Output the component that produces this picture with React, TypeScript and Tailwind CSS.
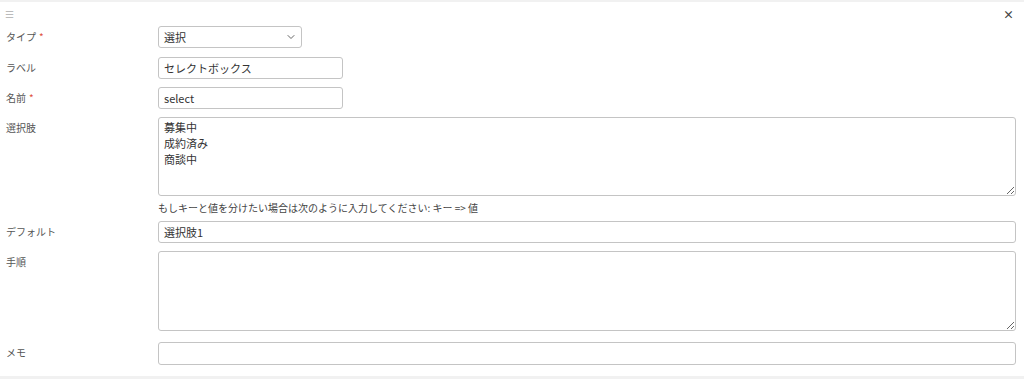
import { ChevronDown } from "lucide-react";

const font = { fontFamily: '"Noto Sans CJK JP", "Noto Sans", sans-serif' };

function Label({ text, required }: { text: string; required?: boolean }) {
  return (
    <div className="w-[158px] shrink-0 pl-[6px] pt-[4px] text-[10px] leading-[14px] text-[#555]">
      {text}
      {required && <span className="ml-[3px] text-[#e0533f]">*</span>}
    </div>
  );
}

const box =
  "border border-[#c4c4c4] rounded-[3px] bg-white px-[5px] text-[11px] text-[#333] outline-none";

export default function App() {
  return (
    <div className="w-[1024px] h-[379px] bg-white border-t-2 border-[#f1f1f1] flex flex-col" style={font}>
      <div className="flex items-center justify-between h-[24px] pl-[5px] pr-[10px]">
        <span className="text-[10px] text-[#bbb] leading-none">☰</span>
        <span className="text-[11px] text-[#444] font-bold leading-none">×</span>
      </div>

      <div className="flex flex-col pr-[8px]">
        <div className="flex h-[22px]">
          <Label text="タイプ" required />
          <div className={`${box} w-[144px] h-[22px] flex items-center justify-between pr-[4px]`}>
            <span>選択</span>
            <ChevronDown className="w-[12px] h-[12px] text-[#666]" strokeWidth={2} />
          </div>
        </div>

        <div className="flex mt-[9px]">
          <Label text="ラベル" />
          <input className={`${box} w-[185px] h-[22px]`} defaultValue="セレクトボックス" />
        </div>

        <div className="flex mt-[8px]">
          <Label text="名前" required />
          <input className={`${box} w-[185px] h-[22px]`} defaultValue="select" />
        </div>

        <div className="flex mt-[8px]">
          <Label text="選択肢" />
          <div className="flex-1 flex flex-col">
            <textarea
              className={`${box} h-[79px] py-[1px] leading-[16px] resize-y`}
              defaultValue={"募集中\n成約済み\n商談中"}
            />
            <p className="text-[10px] text-[#444] mt-[5px] leading-[14px]">
              もしキーと値を分けたい場合は次のように入力してください: キー =&gt; 値
            </p>
          </div>
        </div>

        <div className="flex mt-[6px]">
          <Label text="デフォルト" />
          <input className={`${box} flex-1 h-[22px]`} defaultValue="選択肢1" />
        </div>

        <div className="flex mt-[8px]">
          <Label text="手順" />
          <textarea className={`${box} flex-1 h-[80px] resize-y`} />
        </div>

        <div className="flex mt-[11px]">
          <Label text="メモ" />
          <input className={`${box} flex-1 h-[23px]`} />
        </div>
      </div>

      <div className="mt-auto h-[3px] bg-[#f1f1f1]" />
    </div>
  );
}
